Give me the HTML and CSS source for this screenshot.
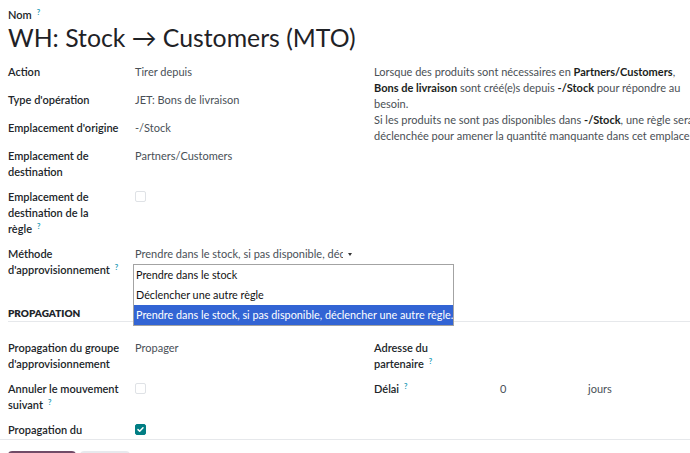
FILE: index.html
```html
<!DOCTYPE html>
<html lang="fr">
<head>
<meta charset="utf-8">
<title>WH: Stock → Customers (MTO)</title>
<link rel="stylesheet" href="styles.css">
</head>
<body>
<div class="page">
  <div class="sheet">
    <div class="name-label">Nom<sup class="help">?</sup></div>
    <h1 class="title">WH: Stock → Customers (MTO)</h1>

    <div class="group">
      <div class="col-left">
        <div class="row"><div class="label">Action</div><div class="value">Tirer depuis</div></div>
        <div class="row"><div class="label">Type d'opération</div><div class="value">JET: Bons de livraison</div></div>
        <div class="row"><div class="label">Emplacement d'origine</div><div class="value">-/Stock</div></div>
        <div class="row"><div class="label">Emplacement de destination</div><div class="value">Partners/Customers</div></div>
        <div class="row"><div class="label">Emplacement de destination de la règle<sup class="help">?</sup></div><div class="value"><span class="check"></span></div></div>
        <div class="row"><div class="label">Méthode d'approvisionnement<sup class="help">?</sup></div>
          <div class="value select-wrap">
            <div class="select"><span class="select-text">Prendre dans le stock, si pas disponible, déclencher une autre règle.</span><span class="caret"></span></div>
            <ul class="dropdown">
              <li class="option">Prendre dans le stock</li>
              <li class="option">Déclencher une autre règle</li>
              <li class="option selected">Prendre dans le stock, si pas disponible, déclencher une autre règle.</li>
            </ul>
          </div>
        </div>
      </div>
      <div class="col-right">
        <div class="desc">
          <div class="line">Lorsque des produits sont nécessaires en <b>Partners/Customers</b>,</div>
          <div class="line"><b>Bons de livraison</b> sont créé(e)s depuis <b>-/Stock</b> pour répondre au</div>
          <div class="line">besoin.</div>
          <div class="line">Si les produits ne sont pas disponibles dans <b>-/Stock</b>, une règle sera</div>
          <div class="line">déclenchée pour amener la quantité manquante dans cet emplacement.</div>
        </div>
      </div>
    </div>

    <div class="section-title">PROPAGATION</div>

    <div class="group group-prop">
      <div class="col-left">
        <div class="row"><div class="label">Propagation du groupe d'approvisionnement</div><div class="value">Propager</div></div>
        <div class="row"><div class="label">Annuler le mouvement suivant<sup class="help">?</sup></div><div class="value"><span class="check"></span></div></div>
        <div class="row"><div class="label">Propagation du</div><div class="value"><span class="check checked"><svg viewBox="0 0 11 11" width="11" height="11"><path d="M3 5.6 L4.7 7.2 L8 3.8" fill="none" stroke="#fff" stroke-width="1.5" stroke-linecap="round" stroke-linejoin="round"/></svg></span></div></div>
      </div>
      <div class="col-right">
        <div class="row row-r"><div class="label label-r">Adresse du partenaire<sup class="help">?</sup></div><div class="value"></div></div>
        <div class="row row-r row-delay"><div class="label label-r">Délai<sup class="help">?</sup></div><div class="value">0</div><div class="value">jours</div></div>
      </div>
    </div>
  </div>
  <div class="footer">
    <button class="btn btn-primary">Enregistrer</button>
    <button class="btn btn-secondary">Annuler</button>
  </div>
</div>
</body>
</html>
```

FILE: styles.css
```css
html, body {
  margin: 0;
  padding: 0;
  background: #fff;
  overflow: hidden;
}
body {
  font-family: Lato, "Noto Sans", sans-serif;
  font-size: 11px;
  line-height: 16px;
  color: #212529;
}
.page {
  width: 690px;
  height: 453px;
  display: flex;
  flex-direction: column;
  overflow: hidden;
}
.sheet {
  flex: none;
  height: 439px;
  box-sizing: border-box;
  padding: 7px 0 0 8px;
  overflow: hidden;
  position: relative;
}
.name-label {
  font-weight: 600;
  color: #212529;
}
.help {
  font-size: 7.5px;
  line-height: 0;
  color: #1d9bb5;
  vertical-align: 0;
  position: relative;
  top: -4px;
  margin-left: 5px;
  font-weight: 700;
}
.title {
  margin: 0 0 11px;
  font-size: 24.8px;
  line-height: 30px;
  font-weight: 400;
  color: #1f2226;
  white-space: nowrap;
}
.group {
  display: grid;
  grid-template-columns: 366px auto;
}
.row {
  display: grid;
  grid-template-columns: 127px 1fr;
  padding-bottom: 9px;
}
.row-r {
  grid-template-columns: 126px 1fr;
}
.row-delay {
  grid-template-columns: 126px 88px 1fr;
}
.label {
  font-weight: 600;
  color: #212529;
  padding-right: 13px;
}
.label-r {
  padding-right: 28px;
}
.value {
  min-height: 19px;
  color: #495057;
}
.check {
  display: block;
  width: 11px;
  height: 11px;
  box-sizing: border-box;
  border: 1px solid #dfe2e6;
  border-radius: 2px;
  margin-top: 2px;
}
.check.checked {
  background: #017e84;
  border-color: #017e84;
}
.check.checked svg {
  display: block;
  margin: -1px;
}
.select-wrap {
  position: relative;
}
.select {
  display: flex;
  align-items: center;
  width: 220px;
  height: 16px;
}
.select-text {
  width: 208px;
  overflow: hidden;
  white-space: nowrap;
}
.caret {
  margin-left: 5px;
  width: 0;
  height: 0;
  border-left: 2.5px solid transparent;
  border-right: 2.5px solid transparent;
  border-top: 3.5px solid #333;
}
.dropdown {
  position: absolute;
  z-index: 5;
  left: -2px;
  top: 18px;
  margin: 0;
  padding: 0;
  list-style: none;
  width: 321px;
  box-sizing: border-box;
  border: 1px solid #a3a3a3;
  background: #fff;
  font-size: 10.8px;
  line-height: 20px;
  color: #111;
  font-weight: 400;
}
.option {
  padding-left: 2px;
  white-space: nowrap;
}
.option.selected {
  background: #3264d4;
  color: #fff;
}
.desc {
  color: #4a4f55;
  white-space: nowrap;
}
.desc b {
  color: #1b1e21;
  font-weight: 700;
}
.section-title {
  margin-top: 18px;
  margin-bottom: 18px;
  font-size: 10px;
  font-weight: 800;
  line-height: 16px;
  color: #212529;
  border-bottom: 1px solid #e6e8eb;
}
.footer {
  flex: 1;
  border-top: 1px solid #e6e8eb;
  padding: 11px 8px 0;
  display: flex;
  gap: 4px;
  align-items: flex-start;
}
.btn {
  font-family: inherit;
  font-size: 11px;
  border: none;
  border-radius: 4px;
  height: 26px;
  padding: 0;
}
.btn-primary {
  width: 68px;
  background: #714b67;
  color: #fff;
}
.btn-secondary {
  width: 50px;
  background: #e7e9ed;
  color: #212529;
}
```
